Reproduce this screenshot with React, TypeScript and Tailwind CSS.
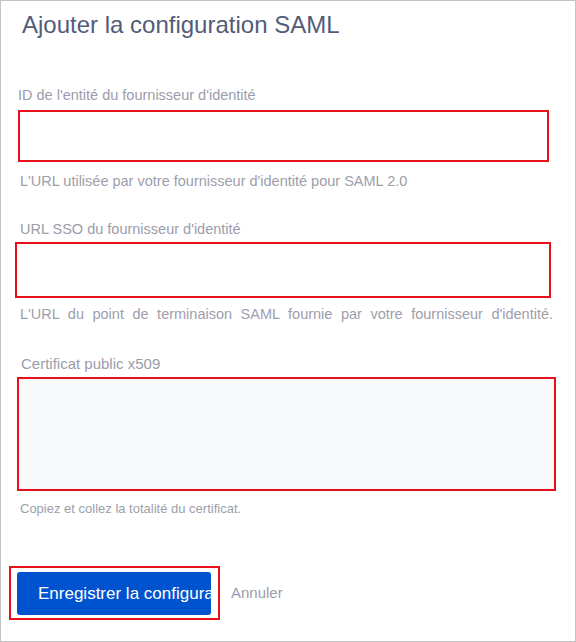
import React from 'react';

const font = { fontFamily: '"Liberation Sans", Arial, sans-serif' };

const App: React.FC = () => {
  return (
    <div
      className="w-[576px] h-[642px] bg-white border border-[#c3c3c3] overflow-hidden"
      style={font}
    >
      <h1 className="mt-[10px] ml-[21px] text-[24px] leading-[28px] text-[#525c7a] font-normal">
        Ajouter la configuration SAML
      </h1>

      {/* ID de l'entité */}
      <label className="block mt-[47px] ml-[17px] text-[14.5px] leading-[18px] text-[#9b9cab]">
        ID de l'entité du fournisseur d'identité
      </label>
      <div className="mt-[6px] ml-[17px] w-[531px] h-[52px] border-2 border-[#e8101c] bg-white" />
      <p className="mt-[11px] ml-[19px] text-[14.5px] leading-[17px] text-[#9d9eac]">
        L'URL utilisée par votre fournisseur d'identité pour SAML 2.0
      </p>

      {/* URL SSO */}
      <label className="block mt-[30px] ml-[19px] text-[14.5px] leading-[18px] text-[#9b9cab]">
        URL SSO du fournisseur d'identité
      </label>
      <div className="mt-[4px] ml-[14px] w-[536px] h-[56px] border-2 border-[#e8101c] bg-white" />
      <p className="mt-[8px] ml-[19px] text-[14.5px] leading-[17px] text-[#9d9eac] whitespace-nowrap [word-spacing:4.5px]">
        L'URL du point de terminaison SAML fournie par votre fournisseur d'identité.
      </p>

      {/* Certificat */}
      <label className="block mt-[32px] ml-[20px] text-[15px] leading-[18px] text-[#9b9cab]">
        Certificat public x509
      </label>
      <div className="mt-[4px] ml-[16px] w-[539px] h-[114px] border-2 border-[#e8101c] bg-[#f8f9fb]" />
      <p className="mt-[10px] ml-[19px] text-[13px] leading-[15px] text-[#9d9eac]">
        Copiez et collez la totalité du certificat.
      </p>

      {/* Actions */}
      <div className="mt-[50px] ml-[8px] flex items-center">
        <div className="w-[211px] h-[54px] border-2 border-[#e8101c] pl-[6px] pt-[4px]">
          <button className="w-[194px] h-[43px] rounded-[3px] bg-[#0053ce] text-white text-[17px] leading-[20px] text-left pl-[21px] whitespace-nowrap overflow-hidden">
            Enregistrer la configuration
          </button>
        </div>
        <span className="ml-[11px] text-[15px] leading-[18px] text-[#9b9cab]">Annuler</span>
      </div>
    </div>
  );
};

export default App;
